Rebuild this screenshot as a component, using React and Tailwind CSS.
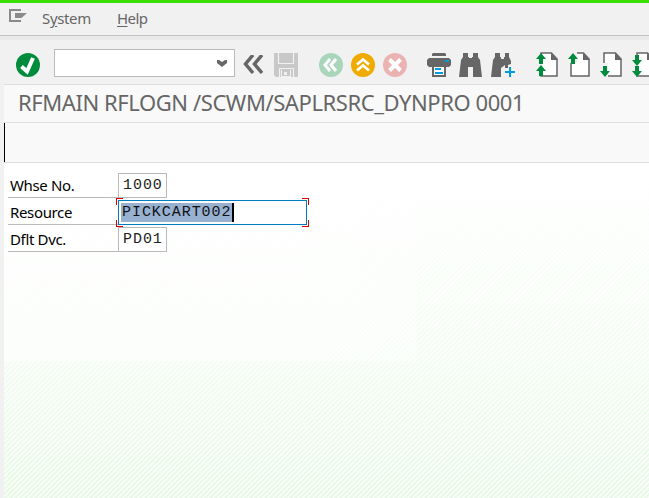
import React from "react";

function Icon({ w = 24, h = 24, className = "", children }) {
  return (
    <svg width={w} height={h} viewBox={`0 0 ${w} ${h}`} className={`block shrink-0 ${className}`}>
      {children}
    </svg>
  );
}

function MenuIcon() {
  return (
    <Icon w={18} h={13}>
      <path d="M12 1H1V12H12" fill="none" stroke="#8a8a8a" strokeWidth="2" />
      <path d="M6 4H18L12.500 9H6Z" fill="#8a8a8a" />
    </Icon>
  );
}

function PrintIcon() {
  return (
    <Icon className="ml-[20px]">
      <path d="M5 3V1L6 0H18L19 1V3Z" fill="#666" />
      <path d="M2 5H22L24 7V12L22 14H2L0 12V7Z" fill="#666" />
      <path d="M4 14H5V24H19V14H20" fill="#666" />
      <path d="M7 14H17V22H7Z" fill="#fff" />
      <path d="M8 15H14V17H8ZM8 19H16V21H8ZM18 7H22V9H18Z" fill="#009de0" />
    </Icon>
  );
}

function FindIcon() {
  return (
    <Icon className="ml-[8px]">
      <path
        d="M4 0H9V4H10V5H13V4H14V0H19V4L21 7L23 24H14V14H9V24H0L2 7L4 4Z"
        fill="#666"
      />
    </Icon>
  );
}

function FindNextIcon() {
  return (
    <Icon w={25} className="ml-[8px]">
      <path d="M4 0H9V4H10V6H13V4H14V0H18V4L20 8V11L17 12V15H14V12L10 15V24H0L2 7L4 4Z" fill="#666" />
      <path d="M14 19H24M19 14V24" stroke="#009de0" strokeWidth="2" />
    </Icon>
  );
}

function Page({ left = 5 }) {
  return (
    <>
      <path d={`M${left} 1H15.500L21 7V24H${left}Z`} fill="#fff" stroke="#666" strokeWidth="1.500" />
      <path d="M15 1V8H22Z" fill="#666" />
    </>
  );
}

function Arrow({ x, y, down }) {
  return (
    <path
      transform={`translate(${x} ${y})${down ? " rotate(180)" : ""}`}
      d="M0 -6L5 0H2V5H-2V0H-5Z"
      fill="#008c3c"
    />
  );
}

function Form({ label, children }) {
  return (
    <div className="mb-[2px] flex h-[25px]">
      <div className="h-[25px] w-[110px] shrink-0 whitespace-nowrap border-b border-[#bababa] pl-[2px] text-[15px] leading-[25px] tracking-[-0.35px] text-black">
        {label}
      </div>
      {children}
    </div>
  );
}

const box =
  "h-[25px] w-[49px] border border-[#bababa] bg-white pl-[4px] font-['Liberation_Mono',monospace] text-[15px] leading-[24px] tracking-[0.95px] text-[#222]";

export default function App() {
  return (
    <div className="flex h-[498px] w-[649px] flex-col overflow-hidden bg-[#f1f1f1] font-['Noto_Sans',sans-serif]">
      <div className="h-[3px] shrink-0 bg-[#3be000]" />
      <header className="flex h-[33px] shrink-0 items-start border-b border-[#c2c2c2] pl-[9px] pt-[6px] text-[15px] leading-[18px] text-[#666]">
        <MenuIcon />
        <span className="ml-[15px] w-[75px] tracking-[-0.35px]">
          S<span className="underline underline-offset-2">y</span>stem
        </span>
        <span className="tracking-[-0.6px]">
          <span className="underline underline-offset-2">H</span>elp
        </span>
      </header>
      <div className="h-[4px] shrink-0 bg-[#e9e9e9]" />
      <div className="ml-[4px] flex min-h-0 flex-1 flex-col">
        <div className="flex h-[45px] shrink-0 items-start border-b border-[#dedede] pl-[12px] pt-[13px]">
          <Icon>
            <circle cx="12" cy="12" r="12" fill="#008c3c" />
            <path d="M5.500 13.500L11 18.500L17 5" fill="none" stroke="#fff" strokeWidth="4" />
          </Icon>
          <div className="-mt-[4px] ml-[14px] flex h-[28px] w-[181px] shrink-0 justify-end border border-[#bababa] bg-white pr-[7px] pt-[10px]">
            <Icon w={10} h={7}>
              <path d="M0 0H2L5 2L8 0H10V3L5 7L0 3Z" fill="#666" />
            </Icon>
          </div>
          <Icon w={20} h={20} className="ml-[8px] mt-[2px]">
            <path d="M10 0L2.500 9L10 18M19 0L11.500 9L19 18" fill="none" stroke="#666" strokeWidth="3.500" />
          </Icon>
          <Icon className="ml-[11px]">
            <path d="M0 0H24V24H2L0 22Z" fill="#c8c8c8" />
            <path d="M4.500 0V10.500H19.500V0M5.500 24V15.500H19.500V24" fill="none" stroke="#f1f1f1" strokeWidth="1.200" />
            <path d="M7 17H17V24H7Z" fill="#f1f1f1" />
            <path d="M8 17H16V23H8Z" fill="#c8c8c8" />
            <path d="M10 19H13V22H10Z" fill="#f1f1f1" />
          </Icon>
          <Icon className="ml-[21px]">
            <circle cx="12" cy="12" r="12" fill="#a9d5bb" />
            <path d="M11 6L6 12L11 18M17 6L12 12L17 18" fill="none" stroke="#fff" strokeWidth="3" />
          </Icon>
          <Icon className="ml-[8px]">
            <circle cx="12" cy="12" r="12" fill="#f0ab00" />
            <path d="M6 11.500L12 6.500L18 11.500M6 17.500L12 12.500L18 17.500" fill="none" stroke="#fff" strokeWidth="2.800" />
          </Icon>
          <Icon className="ml-[8px]">
            <circle cx="12" cy="12" r="12" fill="#ebb2b2" />
            <path d="M6.500 6.500L17.500 17.500M17.500 6.500L6.500 17.500" stroke="#fff" strokeWidth="4" />
          </Icon>
          <PrintIcon />
          <FindIcon />
          <FindNextIcon />
          <Icon h={26} className="-mt-[1px] ml-[20px]">
            <Page />
            <path d="M0 3H7V22H0Z" fill="#f1f1f1" />
            <Arrow x={5} y={7} />
            <Arrow x={5} y={19} />
          </Icon>
          <Icon h={26} className="-mt-[1px] ml-[8px]">
            <Page left={3} />
            <path d="M0 0H9V11H0Z" fill="#f1f1f1" />
            <Arrow x={5} y={7} />
          </Icon>
          <Icon h={26} className="-mt-[1px] ml-[8px]">
            <Page left={4} />
            <path d="M0 11H8V25H0Z" fill="#f1f1f1" />
            <Arrow x={5} y={19} down />
          </Icon>
          <Icon h={26} className="-mt-[1px] ml-[8px]">
            <Page />
            <path d="M0 3H7V22H0Z" fill="#f1f1f1" />
            <Arrow x={5} y={8} down />
            <Arrow x={5} y={19} down />
          </Icon>
        </div>
        <h1 className="h-[38px] shrink-0 whitespace-nowrap border-b border-[#dedede] bg-[#f9f9f9] pl-[14px] text-[22px] leading-[35px] tracking-[-0.42px] text-[#666]">
          RFMAIN RFLOGN /SCWM/SAPLRSRC_DYNPRO 0001
        </h1>
        <div className="h-[40px] shrink-0 border-b border-[#dedede] bg-[#f9f9f9]">
          <div className="h-[39px] w-px bg-black" />
        </div>
        <main className="min-h-0 flex-1 bg-[linear-gradient(to_bottom,#fff_0%,rgba(255,255,255,0.55)_55%,rgba(255,255,255,0)_100%),repeating-linear-gradient(135deg,#e9f9e7_0px,#e9f9e7_1.8px,#fff_2.5px,#fff_3.535px)]">
          <div className="h-[198px] w-[413px] bg-[linear-gradient(to_right,rgba(255,255,255,0.6)_70%,rgba(255,255,255,0.4))] pl-[4px] pt-[10px]">
            <Form label="Whse No.">
              <div className={box}>1000</div>
            </Form>
            <Form label="Resource">
              <div className="relative h-[25px] w-[189px] border border-[#007cc0] bg-white p-[2px]">
                <div className="flex h-[19px] w-[113px] border-r-2 border-black bg-[#98b1d1] pl-[1px] font-['Liberation_Mono',monospace] text-[15px] leading-[20px] tracking-[0.95px] text-[#111]">
                  PICKCART002
                </div>
                <i className="absolute -left-[3px] -top-[3px] h-[7px] w-[7px] border-l border-t border-[#e00000]" />
                <i className="absolute -right-[3px] -top-[3px] h-[7px] w-[7px] border-r border-t border-[#e00000]" />
                <i className="absolute -bottom-[3px] -left-[3px] h-[7px] w-[7px] border-b border-l border-[#e00000]" />
                <i className="absolute -bottom-[3px] -right-[3px] h-[7px] w-[7px] border-b border-r border-[#e00000]" />
              </div>
            </Form>
            <Form label="Dflt Dvc.">
              <div className={box}>PD01</div>
            </Form>
          </div>
        </main>
      </div>
    </div>
  );
}
